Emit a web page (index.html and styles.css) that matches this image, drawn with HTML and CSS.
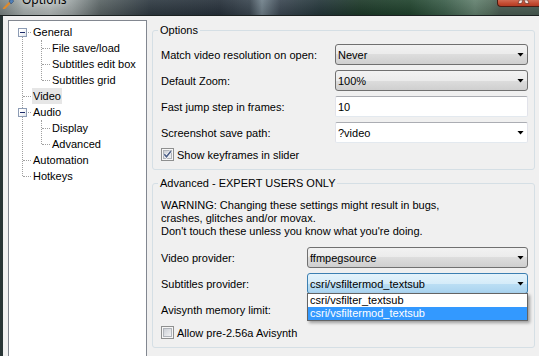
FILE: index.html
```html
<!DOCTYPE html>
<html lang="en">
<head>
<meta charset="utf-8">
<title>Options</title>
<link rel="stylesheet" href="styles.css">
</head>
<body>
<div class="window">
  <header class="titlebar">
    <svg class="app-icon" width="12" height="9" viewBox="0 0 12 9" aria-hidden="true">
      <path d="M2 8.5 L8 2.5" stroke="#e08a2a" stroke-width="2.2" stroke-linecap="round"/>
      <path d="M7 1 L10.5 -1.5 L11.5 1.5 L9 4 Z" fill="#4f7fb8" stroke="#2c4a70" stroke-width="0.6"/>
    </svg>
    <span class="title">Options</span>
    <div class="close-btn">
      <svg width="42" height="6" viewBox="0 0 42 6" aria-hidden="true">
        <polygon points="21.5,0 25,0 23.5,3.5 20,3.5" fill="#f4e8e4" stroke="#5a2418" stroke-width="0.6"/>
        <polygon points="26,0 29.5,0 31,3.5 27.5,3.5" fill="#f4e8e4" stroke="#5a2418" stroke-width="0.6"/>
      </svg>
    </div>
  </header>

  <div class="client">
    <nav class="tree">
      <ul class="tree-root">
        <li>
          <div class="row"><span class="toggle"></span><span class="label">General</span></div>
          <ul class="tree-children">
            <li><div class="row"><span class="label">File save/load</span></div></li>
            <li><div class="row"><span class="label">Subtitles edit box</span></div></li>
            <li><div class="row"><span class="label">Subtitles grid</span></div></li>
          </ul>
        </li>
        <li><div class="row"><span class="label selected">Video</span></div></li>
        <li>
          <div class="row"><span class="toggle"></span><span class="label">Audio</span></div>
          <ul class="tree-children">
            <li><div class="row"><span class="label">Display</span></div></li>
            <li><div class="row"><span class="label">Advanced</span></div></li>
          </ul>
        </li>
        <li><div class="row"><span class="label">Automation</span></div></li>
        <li><div class="row"><span class="label">Hotkeys</span></div></li>
      </ul>
    </nav>

    <main class="pages">
      <fieldset class="group group-options">
        <legend>Options</legend>
        <div class="form form-options">
          <span class="field-label">Match video resolution on open:</span>
          <div class="combo"><span class="combo-text">Never</span><span class="arrow"></span></div>

          <span class="field-label">Default Zoom:</span>
          <div class="combo"><span class="combo-text">100%</span><span class="arrow"></span></div>

          <span class="field-label">Fast jump step in frames:</span>
          <div class="textbox">10</div>

          <span class="field-label">Screenshot save path:</span>
          <div class="textbox combo-edit"><span class="combo-text">?video</span><span class="arrow"></span></div>
        </div>
        <div class="check-row">
          <svg class="checkbox" width="13" height="13" viewBox="0 0 13 13" aria-hidden="true">
            <defs>
              <linearGradient id="cbfill1" x1="0" y1="0" x2="1" y2="1">
                <stop offset="0" stop-color="#c9cdd3"/>
                <stop offset="1" stop-color="#f4f5f6"/>
              </linearGradient>
            </defs>
            <rect x="0.5" y="0.5" width="12" height="12" fill="#f6f6f6" stroke="#8e8f8f"/>
            <rect x="2.5" y="2.5" width="8" height="8" fill="url(#cbfill1)" stroke="#b0b4ba"/>
            <path d="M3.3 6.2 L5.5 8.8 L9.8 3.2" fill="none" stroke="#fff" stroke-width="2.8"/>
            <path d="M3.3 6.2 L5.5 8.8 L9.8 3.2" fill="none" stroke="#4a5d86" stroke-width="1.6"/>
          </svg>
          <span>Show keyframes in slider</span>
        </div>
      </fieldset>

      <fieldset class="group group-advanced">
        <legend>Advanced - EXPERT USERS ONLY</legend>
        <p class="warning">WARNING: Changing these settings might result in bugs,<br>crashes, glitches and/or movax.<br>Don't touch these unless you know what you're doing.</p>
        <div class="form form-advanced">
          <span class="field-label">Video provider:</span>
          <div class="combo"><span class="combo-text">ffmpegsource</span><span class="arrow"></span></div>

          <span class="field-label">Subtitles provider:</span>
          <div class="combo combo-open">
            <span class="combo-text">csri/vsfiltermod_textsub</span><span class="arrow"></span>
            <ul class="dropdown">
              <li>csri/vsfilter_textsub</li>
              <li class="active">csri/vsfiltermod_textsub</li>
            </ul>
          </div>

          <span class="field-label">Avisynth memory limit:</span>
          <div class="textbox" aria-hidden="true"></div>
        </div>
        <div class="check-row">
          <svg class="checkbox" width="13" height="13" viewBox="0 0 13 13" aria-hidden="true">
            <defs>
              <linearGradient id="cbfill2" x1="0" y1="0" x2="1" y2="1">
                <stop offset="0" stop-color="#c9cdd3"/>
                <stop offset="1" stop-color="#f4f5f6"/>
              </linearGradient>
            </defs>
            <rect x="0.5" y="0.5" width="12" height="12" fill="#f6f6f6" stroke="#8e8f8f"/>
            <rect x="2.5" y="2.5" width="8" height="8" fill="url(#cbfill2)" stroke="#b0b4ba"/>
          </svg>
          <span>Allow pre-2.56a Avisynth</span>
        </div>
      </fieldset>
    </main>
  </div>
</div>
</body>
</html>
```

FILE: styles.css
```css
* { box-sizing: border-box; }

html, body {
  margin: 0;
  padding: 0;
  background: #f0f0f0;
}

body {
  font-family: "Liberation Sans", Arial, sans-serif;
  font-size: 11px;
  color: #000;
}

.window {
  width: 539px;
  height: 356px;
  overflow: hidden;
}

/* ---------- title bar ---------- */
.titlebar {
  height: 16px;
  display: flex;
  overflow: hidden;
  border-bottom: 1px solid #1b2121;
  background:
    linear-gradient(180deg, rgba(255,255,255,0.08), rgba(0,0,0,0.12)),
    linear-gradient(90deg,
      #77807f 0px, #a9b1b0 24px, #b4bbba 50px, #9aa2a2 72px, #5a6465 100px,
      #2f3a42 150px, #27313b 220px, #3a4650 250px, #70808a 262px, #3b4752 280px,
      #24363a 320px, #1d3a29 360px, #20432d 410px, #3c5f4b 445px, #62806e 475px,
      #56705f 490px, #4a5d53 500px);
}

.app-icon {
  flex: none;
  margin-left: 2px;
}

.title {
  flex: none;
  margin-left: 8px;
  margin-top: -8px;
  align-self: flex-start;
  font-family: "Noto Sans", "Open Sans", sans-serif;
  font-size: 12px;
  line-height: 16px;
  color: #000;
  text-shadow: 0 0 6px rgba(255,255,255,0.7);
}

.close-btn {
  flex: none;
  margin-left: auto;
  width: 42px;
  height: 7px;
  align-self: flex-start;
  border-left: 1px solid #4b1b12;
  border-bottom: 1px solid #4b1b12;
  border-radius: 0 0 0 4px;
  background: linear-gradient(180deg, #d06a52 0%, #c34a30 60%, #b23c24 100%);
  overflow: hidden;
}

.close-btn svg { display: block; }

/* ---------- client ---------- */
.client {
  display: flex;
  gap: 5px;
  height: 345px;
  padding: 4px 0 0 5px;
  border-left: 3px solid #283535;
  background: #f0f0f0;
}

/* ---------- tree ---------- */
.tree {
  flex: none;
  width: 139px;
  background: #fff;
  border: 1px solid #828790;
  padding-top: 3px;
}

.tree ul {
  list-style: none;
  margin: 0;
  padding: 0;
}

.tree-root,
.tree-children {
  position: relative;
}

.tree-root::before {
  content: "";
  position: absolute;
  left: 13px;
  top: 8px;
  bottom: 8px;
  border-left: 1px dotted #a0a0a0;
}

.tree-children::before {
  content: "";
  position: absolute;
  left: 32px;
  top: 0;
  bottom: 8px;
  border-left: 1px dotted #a0a0a0;
}

.row {
  position: relative;
  height: 16px;
  display: flex;
  align-items: center;
  padding-left: 23px;
}

.row::before {
  content: "";
  position: absolute;
  left: 14px;
  width: 8px;
  top: 8px;
  border-top: 1px dotted #a0a0a0;
}

.tree-children .row { padding-left: 42px; }
.tree-children .row::before { left: 33px; }

.toggle {
  position: absolute;
  left: 9px;
  top: 4px;
  width: 9px;
  height: 9px;
  border: 1px solid #8d9cb5;
  background: linear-gradient(135deg, #ffffff 30%, #dfe4ea 100%);
  z-index: 1;
}

.toggle::after {
  content: "";
  position: absolute;
  left: 1px;
  top: 3px;
  width: 5px;
  height: 1px;
  background: #1d2c6a;
}

.label {
  padding: 0 1px;
  line-height: 16px;
  white-space: nowrap;
}

.label.selected { background: #e6e6e6; }

/* ---------- pages ---------- */
.pages {
  flex: none;
  width: 383px;
}

.group {
  margin: 0;
  min-width: 0;
  padding: 7px 6px 8px 8px;
  border: 1px solid #d5dfe5;
  border-radius: 3px;
}

.group legend {
  padding: 0 2px;
  margin-left: -3px;
  line-height: 13px;
}

.group-options { margin-top: 4px; }
.group-advanced { margin-top: 7px; }

.form {
  display: grid;
  grid-auto-rows: 21px;
  row-gap: 5px;
  align-items: center;
}

.form-options { grid-template-columns: 174px 193px; }
.form-advanced { grid-template-columns: 146px 221px; margin-top: 9px; }

.field-label { white-space: nowrap; }

.combo,
.textbox {
  height: 21px;
  display: flex;
  align-items: center;
  white-space: nowrap;
}

.combo {
  padding: 0 3px 0 2px;
  border: 1px solid #707070;
  border-radius: 3px;
  background: linear-gradient(180deg, #f2f2f2 0%, #ebebeb 50%, #dddddd 50%, #cfcfcf 100%);
}

.textbox {
  padding: 0 3px 0 2px;
  border: 1px solid;
  border-color: #abadb3 #e2e3ea #e3e9ef #e2e3ea;
  border-radius: 2px;
  background: #fff;
}

.combo-text { flex: 1; }

.arrow {
  flex: none;
  width: 7px;
  height: 4px;
  background: #000;
  clip-path: polygon(0 0, 100% 0, 50% 100%);
}

.combo-open {
  position: relative;
  border-color: #3c7fb1;
  background: linear-gradient(180deg, #e5f3fb 0%, #d5ecf9 50%, #bcdff4 50%, #a9d3ef 100%);
}

.dropdown {
  position: absolute;
  z-index: 10;
  left: -1px;
  right: -1px;
  top: 100%;
  margin: 0;
  padding: 0;
  list-style: none;
  background: #fff;
  border: 1px solid #646464;
  box-shadow: 2px 2px 3px rgba(0,0,0,0.35);
}

.dropdown li {
  height: 13px;
  line-height: 13px;
  padding-left: 2px;
}

.dropdown li.active {
  background: #3399ff;
  color: #fff;
}

.check-row {
  display: flex;
  align-items: center;
  gap: 3px;
  height: 13px;
}

.group-options .check-row { margin-top: 5px; }
.group-advanced .check-row { margin-top: 6px; }

.checkbox { flex: none; display: block; }

.warning {
  margin: 2px 0 0;
  line-height: 13px;
  white-space: nowrap;
}
```
